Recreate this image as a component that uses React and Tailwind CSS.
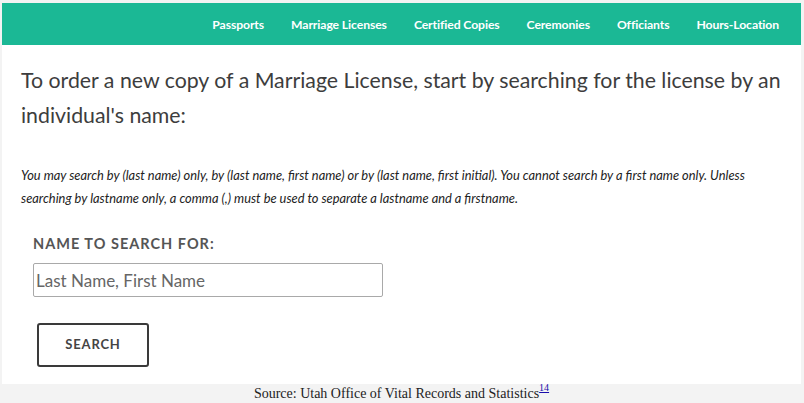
import React from 'react';

const navItems = ['Passports', 'Marriage Licenses', 'Certified Copies', 'Ceremonies', 'Officiants', 'Hours-Location'];

function App() {
  return (
    <div className="w-[804px] h-[403px] bg-[#f3f3f3] pt-[3px] overflow-hidden">
      <div className="ml-[2px] w-[799px] bg-white h-[381px]">
        {/* Top nav */}
        <nav className="h-[42px] bg-[#1bb895] flex items-center justify-end pr-[22px] pt-[3px] gap-[27px] font-['Lato',sans-serif] font-bold text-[12.2px] text-white">
          {navItems.map((item) => (
            <a key={item} className="tracking-[-0.1px]">{item}</a>
          ))}
        </nav>

        <div className="px-[19px] pt-[18px]">
          <h1 className="font-['Lato',sans-serif] text-[21.3px] leading-[35px] text-[#3d3d3d] w-[770px]">
            To order a new copy of a Marriage License, start by searching for the license by an individual's name:
          </h1>

          <p className="mt-[31px] font-['Lato',sans-serif] italic text-[12.85px] leading-[23px] text-[#222] w-[762px]">
            You may search by (last name) only, by (last name, first name) or by (last name, first initial). You cannot search by a first name only. Unless searching by lastname only, a comma (,) must be used to separate a lastname and a firstname.
          </p>

          <div className="pl-[12px] pt-[24px]">
            <label className="block font-['Lato',sans-serif] font-bold text-[14.5px] tracking-[1px] text-[#555] leading-[20px]">
              NAME TO SEARCH FOR:
            </label>
            <input
              type="text"
              placeholder="Last Name, First Name"
              className="mt-[9px] w-[350px] h-[34px] border border-[#a9a9a9] rounded-[2px] px-[2px] font-['Lato',sans-serif] text-[17px] placeholder:text-[#666] outline-none"
            />
            <div className="pt-[26px] pl-[4px]">
              <button className="w-[112px] h-[44px] border-2 border-[#3a3a3a] rounded-[3px] font-['Lato',sans-serif] font-bold text-[13px] tracking-[0.8px] text-[#444]">
                SEARCH
              </button>
            </div>
          </div>
        </div>
      </div>

      <div className="h-[19px] flex items-center justify-center font-['Liberation_Serif',serif] text-[14px] text-[#222] pr-[1px]">
        <span>Source: Utah Office of Vital Records and Statistics</span>
        <sup className="text-[10px] text-[#1a0dab] underline -translate-y-[1px]">14</sup>
      </div>
    </div>
  );
}

export default App;
